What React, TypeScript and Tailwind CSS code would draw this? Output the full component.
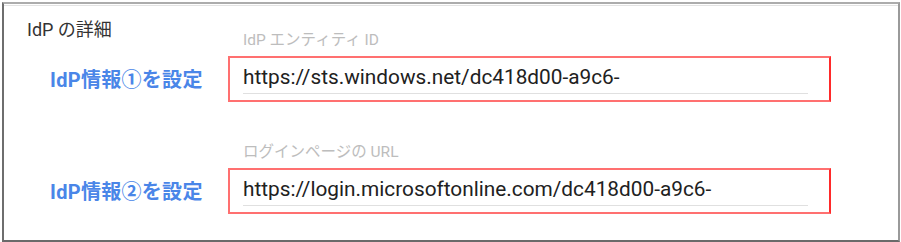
const FONT = "font-['Roboto','Noto_Sans_CJK_JP',sans-serif]"

const FIELDS = [
  { step: 'IdP情報①を設定', label: 'IdP エンティティ ID', value: 'https://sts.windows.net/dc418d00-a9c6-' },
  { step: 'IdP情報②を設定', label: 'ログインページの URL', value: 'https://login.microsoftonline.com/dc418d00-a9c6-' },
]

export default function App() {
  return (
    <div className={`w-[901px] h-[242px] bg-white overflow-hidden pl-[2px] pt-[2px] ${FONT}`}>
      <div className="w-[898px] h-[240px] border-t-2 border-t-[#acacac] border-l-2 border-l-[#6e6e6e] border-r-2 border-r-[#9a9a9a] border-b-2 border-b-[#6a6a6a]">
        <div className="mt-[1px] border-t border-[#e3e3e3]">
          <div className="pl-[23px] pt-[13px] text-[18px] leading-[22px] text-[#333]">IdP の詳細</div>

          <div className="mt-[-11px] flex flex-col gap-[40px]">
            {FIELDS.map((f) => (
              <Field key={f.label} {...f} />
            ))}
          </div>
        </div>
      </div>
    </div>
  )
}

function Field({ step, label, value }: { step: string; label: string; value: string }) {
  return (
    <div>
      <div className="pl-[239px] text-[15.5px] leading-[20px] text-[#bdbdbd]">{label}</div>
      <div className="mt-[6px] flex items-center">
        <div className="w-[224px] pl-[46px] pt-[2px] text-[20px] font-bold text-[#4a86e8] leading-[24px] tracking-[0.3px]">{step}</div>
        <div className="w-[603px] h-[46px] border-2 border-[#ff7070] border-r-[#ff2a2a] pl-[13px] pr-[21px] pt-[6px]">
          <div className="border-b border-[#e0e0e0] pb-[3px] text-[20.8px] leading-[26px] text-[#212121] whitespace-nowrap">
            {value}
          </div>
        </div>
      </div>
    </div>
  )
}
